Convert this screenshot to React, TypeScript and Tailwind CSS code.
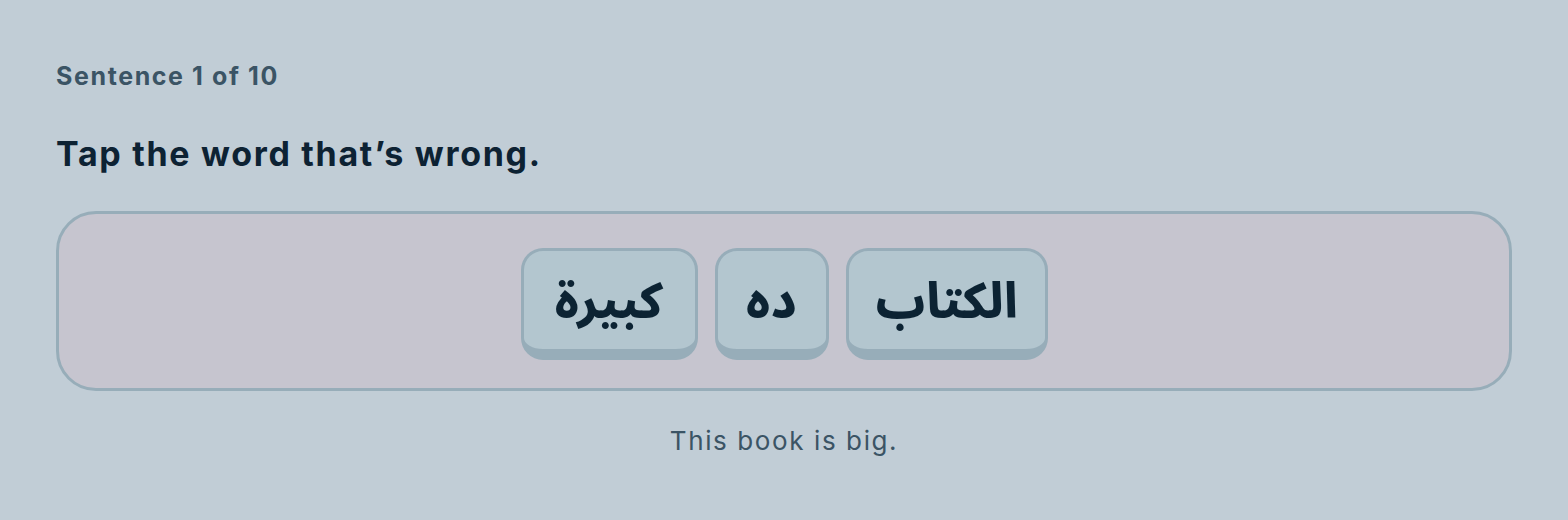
import React from "react";

const words = [
  { text: "الكتاب", width: "w-[202px]" },
  { text: "ده", width: "w-[114px]" },
  { text: "كبيرة", width: "w-[177px]" },
];

function WordChip({ text, width }: { text: string; width: string }) {
  return (
    <button
      type="button"
      className={`${width} flex h-[112px] items-center justify-center rounded-[22px] border-[3px] border-b-[11px] border-[#97adb9] bg-[#b3c6cf] text-[49px] font-extrabold leading-none text-[#0c2333] [font-family:'Noto_Sans_Arabic','Noto_Sans','DejaVu_Sans',sans-serif]`}
    >
      <span className="relative top-[2px]">{text}</span>
    </button>
  );
}

export default function App() {
  return (
    <div className="min-h-screen bg-[#c1cdd6] px-[56px] pt-[60px] [font-family:Inter,'Noto_Sans',sans-serif]">
      <p className="text-[25px] font-bold leading-[32px] tracking-[1.6px] text-[#3b5465]">Sentence 1 of 10</p>
      <h1 className="mt-[40px] text-[34px] font-bold leading-[44px] tracking-[1.7px] text-[#0d2233]">
        Tap the word that’s wrong.
      </h1>
      <div className="mt-[35px] flex h-[180px] items-start justify-center rounded-[40px] border-[3px] border-[#97adb9] bg-[#c6c5cf] pt-[34px]">
        <div dir="rtl" className="flex gap-[17px]">
          {words.map((w) => (
            <WordChip key={w.text} text={w.text} width={w.width} />
          ))}
        </div>
      </div>
      <p className="mt-[34px] text-center text-[26px] leading-[32px] tracking-[1.6px] text-[#3b5465]">This book is big.</p>
    </div>
  );
}
